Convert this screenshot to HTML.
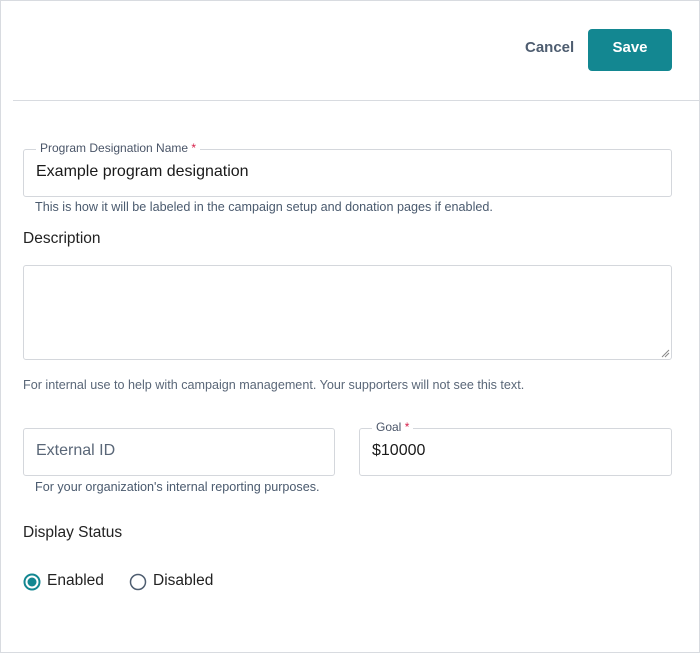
<!DOCTYPE html>
<html><head><style>
*{box-sizing:border-box;margin:0;padding:0}
body{width:700px;height:653px;position:relative;background:#fff;font-family:"Liberation Sans",sans-serif;overflow:hidden}
.frame{position:absolute;left:0;top:0;width:700px;height:653px;border:1px solid #d8dbe0}
.a{position:absolute;white-space:nowrap}
.box{position:absolute;border:1px solid #d4d7dc;border-radius:3px;background:#fff}
.lbl{position:absolute;background:#fff;padding:0 4px;font-size:12px;color:#4a5568;line-height:14px}
.req{color:#d6204a}
.help{font-size:12.6px;color:#4a5a6e}
.val{font-size:16px;color:#1a1a1a}
</style></head><body>
<div class="frame"></div>
<div class="a" style="left:525px;top:39px;font-size:15px;font-weight:bold;color:#4e5d70">Cancel</div>
<div class="a" style="left:588px;top:29px;width:84px;height:42px;background:#138791;border-radius:4px;color:#fff;font-weight:bold;font-size:15px;text-align:center;line-height:38px">Save</div>
<div class="a" style="left:13px;top:100px;width:687px;height:1px;background:#d8dbe0"></div>

<div class="box" style="left:23px;top:149px;width:649px;height:48px"></div>
<div class="lbl" style="left:36px;top:141px">Program Designation Name<span class="req"> *</span></div>
<div class="a val" style="left:36px;top:163px">Example program designation</div>
<div class="a help" style="left:35px;top:200px">This is how it will be labeled in the campaign setup and donation pages if enabled.</div>

<div class="a" style="left:23px;top:230px;font-size:15.5px;color:#222">Description</div>
<div class="box" style="left:23px;top:265px;width:649px;height:95px"></div>
<svg class="a" style="left:661px;top:349px" width="9" height="9"><path d="M1 8L8 1M4 8L8 4" stroke="#888" stroke-width="1"/></svg>
<div class="a help" style="left:23px;top:378px;color:#5a6778">For internal use to help with campaign management. Your supporters will not see this text.</div>

<div class="box" style="left:23px;top:428px;width:312px;height:48px"></div>
<div class="a" style="left:36px;top:442px;font-size:16px;color:#5a6778">External ID</div>
<div class="a help" style="left:35px;top:480px">For your organization's internal reporting purposes.</div>

<div class="box" style="left:359px;top:428px;width:313px;height:48px"></div>
<div class="lbl" style="left:372px;top:420px">Goal<span class="req"> *</span></div>
<div class="a val" style="left:372px;top:442px">$10000</div>

<div class="a" style="left:23px;top:524px;font-size:15.5px;color:#222">Display Status</div>
<svg class="a" style="left:23px;top:573px" width="18" height="18"><circle cx="9" cy="9" r="7.5" fill="none" stroke="#138791" stroke-width="2"/><circle cx="9" cy="9" r="4.5" fill="#138791"/></svg>
<div class="a" style="left:47px;top:572px;font-size:15.5px;color:#222">Enabled</div>
<svg class="a" style="left:129px;top:573px" width="18" height="18"><circle cx="9" cy="9" r="7.5" fill="none" stroke="#4e5d70" stroke-width="1.5"/></svg>
<div class="a" style="left:153px;top:572px;font-size:15.5px;color:#222">Disabled</div>
</body></html>
